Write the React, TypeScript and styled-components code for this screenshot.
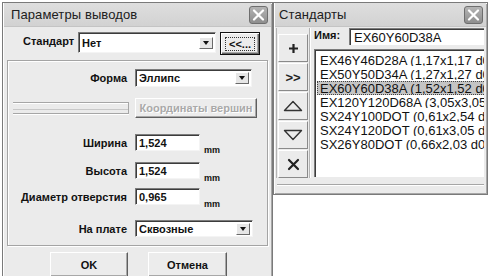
import React from 'react';
import styled, { createGlobalStyle } from 'styled-components';

const Global = createGlobalStyle`
  html, body { margin: 0; padding: 0; background: #ffffff; }
  body { font-family: "Liberation Sans", Arial, sans-serif; overflow: hidden; color: #111; }
  * { box-sizing: border-box; }
`;

const Page = styled.div`
  width: 490px;
  height: 276px;
  overflow: hidden;
  display: flex;
  align-items: flex-start;
  padding: 2px 0 0 2px;
`;

const Window = styled.div<{ $w: number; $h: number }>`
  width: ${p => p.$w}px;
  height: ${p => p.$h}px;
  flex: none;
  border: 1px solid #7a7a7a;
  box-shadow: inset 1px 1px 0 #ffffff, inset -1px -1px 0 #a8a8a8;
  background: #ebebeb;
  display: flex;
  flex-direction: column;
  padding: 0 1px;
`;

const TitleBar = styled.div<{ $pl: number }>`
  height: 24px;
  flex: none;
  display: flex;
  align-items: center;
  justify-content: space-between;
  padding: 0 3px 0 ${p => p.$pl}px;
  background: linear-gradient(#dedede, #d2d2d2);
  border-bottom: 1px solid #c4c4c4;
  font-size: 13px;
  color: #202020;
  letter-spacing: 0.1px;
`;

const CloseBtn = styled.div`
  width: 19px;
  height: 18px;
  border: 1px solid #6e6e6e;
  border-radius: 3px;
  background: linear-gradient(#b4b4b4, #8e8e8e);
  display: flex;
  align-items: center;
  justify-content: center;
`;

const Close = () => (
  <CloseBtn>
    <svg width="13" height="12" viewBox="0 0 13 12">
      <path d="M2 1.5 L11 10.5 M11 1.5 L2 10.5" stroke="#ffffff" strokeWidth="2.2" strokeLinecap="round" />
    </svg>
  </CloseBtn>
);

/* ---------- left dialog ---------- */

const StdRow = styled.div`
  display: flex;
  align-items: flex-start;
  height: 23px;
  margin-top: 5px;
  padding-left: 19px;
`;

const StdLabel = styled.div`
  width: 55px;
  padding-top: 3px;
  font-size: 11px;
  font-weight: bold;
`;

const Combo = styled.div<{ $w: number; $h: number }>`
  width: ${p => p.$w}px;
  height: ${p => p.$h}px;
  background: #fff;
  border-top: 1px solid #7c7c7c;
  border-left: 1px solid #7c7c7c;
  border-right: 1px solid #f4f4f4;
  border-bottom: 1px solid #f4f4f4;
  box-shadow: inset 1px 1px 0 #3c3c3c;
  display: flex;
  align-items: center;
  justify-content: space-between;
  padding: 0 2px 0 3px;
  font-size: 11px;
  font-weight: bold;
`;

const Drop = styled.div`
  width: 14px;
  height: 12px;
  background: #e6e6e6;
  border-top: 1px solid #fff;
  border-left: 1px solid #fff;
  border-right: 1px solid #6a6a6a;
  border-bottom: 1px solid #6a6a6a;
  display: flex;
  align-items: center;
  justify-content: center;
`;

const DropArrow = () => (
  <Drop>
    <svg width="6" height="4" viewBox="0 0 6 4">
      <path d="M0 0 H6 L3 4 Z" fill="#111" />
    </svg>
  </Drop>
);

const DefaultBtn = styled.div`
  width: 40px;
  height: 23px;
  margin-left: 4px;
  border: 1px solid #111;
  box-shadow: inset 1px 1px 0 #fff, inset -1px -1px 0 #666, inset -2px -2px 0 #a8a8a8;
  background: #ececec;
  display: flex;
  align-items: center;
  justify-content: center;
  font-size: 11px;
  font-weight: bold;
  &::after {
    content: '';
  }
`;

const FocusBox = styled.span`
  border: 1px dotted #333;
  padding: 0 3px;
  line-height: 12px;
`;

const GroupBox = styled.div`
  margin: 5px 3px 0 3px;
  height: 186px;
  border: 1px solid #a4a4a4;
  box-shadow: inset 1px 1px 0 #ffffff, 1px 1px 0 #ffffff;
  display: flex;
  flex-direction: column;
`;

const FieldRow = styled.div<{ $mt: number; $h: number }>`
  display: flex;
  align-items: center;
  margin-top: ${p => p.$mt}px;
  height: ${p => p.$h}px;
`;

const FieldLabel = styled.div`
  width: 119px;
  margin-right: 8px;
  text-align: right;
  font-size: 11px;
  font-weight: bold;
  white-space: nowrap;
`;

const Splitter = styled.div`
  width: 116px;
  height: 12px;
  margin: 0 6px 0 5px;
  border-top: 1px solid #a6a6a6;
  border-bottom: 1px solid #a6a6a6;
  border-right: 1px solid #a6a6a6;
  box-shadow: inset 0 1px 0 #fff, 0 1px 0 #fff, inset 0 -3px 0 #ebebeb, inset 0 -4px 0 #c8c8c8;
`;

const FlatBtn = styled.div<{ $w: number; $h: number; $disabled?: boolean }>`
  width: ${p => p.$w}px;
  height: ${p => p.$h}px;
  background: #ececec;
  border-top: 1px solid #ffffff;
  border-left: 1px solid #ffffff;
  border-right: 1px solid #5e5e5e;
  border-bottom: 1px solid #5e5e5e;
  box-shadow: inset -1px -1px 0 #a8a8a8;
  display: flex;
  align-items: center;
  justify-content: center;
  font-size: 11px;
  font-weight: bold;
  color: ${p => (p.$disabled ? '#a9a9a9' : '#111')};
  text-shadow: ${p => (p.$disabled ? '1px 1px 0 #ffffff' : 'none')};
`;

const TextBox = styled.div`
  width: 65px;
  height: 17px;
  background: #fff;
  border-top: 1px solid #7c7c7c;
  border-left: 1px solid #7c7c7c;
  border-right: 1px solid #f4f4f4;
  border-bottom: 1px solid #f4f4f4;
  box-shadow: inset 1px 1px 0 #3c3c3c;
  padding: 1px 0 0 3px;
  font-size: 11px;
  font-weight: bold;
  line-height: 14px;
`;

const Unit = styled.div`
  align-self: flex-end;
  margin: 0 0 -4px 4px;
  font-size: 9px;
  font-weight: bold;
`;

const ButtonRow = styled.div`
  display: flex;
  gap: 20px;
  margin-top: 6px;
  padding-left: 46px;
`;

/* ---------- right dialog ---------- */

const RightBody = styled.div`
  display: flex;
  margin-top: 1px;
`;

const ToolColumn = styled.div`
  width: 34px;
  margin-left: 1px;
  padding: 6px 0 0 1px;
  border-left: 1px solid #b4b4b4;
  border-right: 1px solid #b4b4b4;
  box-shadow: 1px 0 0 #ffffff;
  display: flex;
  flex-direction: column;
  gap: 1px;
`;

const ToolBtn = styled.div`
  width: 30px;
  height: 28px;
  background: #ebebeb;
  border-top: 1px solid #ffffff;
  border-left: 1px solid #ffffff;
  border-right: 1px solid #8a8a8a;
  border-bottom: 1px solid #8a8a8a;
  display: flex;
  align-items: center;
  justify-content: center;
  font-size: 13px;
  font-weight: bold;
  color: #222;
`;

const RightCol = styled.div`
  width: 170px;
  margin-left: 4px;
  display: flex;
  flex-direction: column;
`;

const NameRow = styled.div`
  display: flex;
  align-items: flex-start;
  height: 17px;
`;

const NameLabel = styled.div`
  width: 35px;
  padding-top: 1px;
  font-size: 11px;
  font-weight: bold;
`;

const NameInput = styled.div`
  flex: 1;
  height: 17px;
  background: #fff;
  border-top: 1px solid #7c7c7c;
  border-left: 1px solid #7c7c7c;
  box-shadow: inset 1px 1px 0 #3c3c3c;
  padding: 1px 0 0 4px;
  font-size: 13px;
  line-height: 15px;
  white-space: nowrap;
  overflow: hidden;
`;

const ListBox = styled.div`
  margin-top: 4px;
  height: 128px;
  background: #fff;
  border-top: 1px solid #7c7c7c;
  border-left: 1px solid #7c7c7c;
  box-shadow: inset 1px 1px 0 #3c3c3c;
  padding: 3px 0 0 2px;
  overflow: hidden;
`;

const ListItem = styled.div<{ $sel?: boolean }>`
  height: 14px;
  line-height: 13px;
  font-size: 13px;
  padding-left: 2px;
  white-space: nowrap;
  overflow: hidden;
  color: #111;
  background: ${p => (p.$sel ? '#c4c4c4' : 'transparent')};
  border: 1px dotted ${p => (p.$sel ? '#444' : 'transparent')};
  border-right: none;
  margin: ${p => (p.$sel ? '0' : '0')};
`;

const Separator = styled.div`
  margin: 6px 2px 0 2px;
  height: 2px;
  border-top: 1px solid #a6a6a6;
  border-bottom: 1px solid #ffffff;
`;

const items = [
  'EX46Y46D28A (1,17x1,17 d0,71)',
  'EX50Y50D34A (1,27x1,27 d0,86)',
  'EX60Y60D38A (1,52x1,52 d0,97)',
  'EX120Y120D68A (3,05x3,05 d1,73)',
  'SX24Y100DOT (0,61x2,54 d0)',
  'SX24Y120DOT (0,61x3,05 d0)',
  'SX26Y80DOT (0,66x2,03 d0)',
];

const TriUp = () => (
  <svg width="20" height="12" viewBox="0 0 20 12">
    <path d="M1.5 10.5 L10 1.5 L18.5 10.5 Z" fill="none" stroke="#333" strokeWidth="1.4" strokeLinejoin="round" />
  </svg>
);

const TriDown = () => (
  <svg width="20" height="12" viewBox="0 0 20 12">
    <path d="M1.5 1.5 L10 10.5 L18.5 1.5 Z" fill="none" stroke="#333" strokeWidth="1.4" strokeLinejoin="round" />
  </svg>
);

const Cross = () => (
  <svg width="13" height="13" viewBox="0 0 13 13">
    <path d="M2 2 L11 11 M11 2 L2 11" stroke="#222" strokeWidth="2.2" strokeLinecap="round" />
  </svg>
);

const Plus = () => (
  <svg width="11" height="11" viewBox="0 0 11 11">
    <path d="M5.5 1 V10 M1 5.5 H10" stroke="#222" strokeWidth="2.2" />
  </svg>
);

export default function App() {
  return (
    <>
      <Global />
      <Page>
        <Window $w={271} $h={282}>
          <TitleBar $pl={7}>
            <span>Параметры выводов</span>
            <Close />
          </TitleBar>
          <StdRow>
            <StdLabel>Стандарт</StdLabel>
            <Combo $w={138} $h={21}>
              <span>Нет</span>
              <DropArrow />
            </Combo>
            <DefaultBtn>
              <FocusBox>&lt;&lt;...</FocusBox>
            </DefaultBtn>
          </StdRow>
          <GroupBox>
            <FieldRow $mt={8} $h={18}>
              <FieldLabel>Форма</FieldLabel>
              <Combo $w={117} $h={18}>
                <span>Эллипс</span>
                <DropArrow />
              </Combo>
            </FieldRow>
            <FieldRow $mt={11} $h={20}>
              <Splitter />
              <FlatBtn $w={122} $h={20} $disabled>Координаты вершин</FlatBtn>
            </FieldRow>
            <FieldRow $mt={16} $h={17}>
              <FieldLabel>Ширина</FieldLabel>
              <TextBox>1,524</TextBox>
              <Unit>mm</Unit>
            </FieldRow>
            <FieldRow $mt={11} $h={17}>
              <FieldLabel>Высота</FieldLabel>
              <TextBox>1,524</TextBox>
              <Unit>mm</Unit>
            </FieldRow>
            <FieldRow $mt={9} $h={17}>
              <FieldLabel>Диаметр отверстия</FieldLabel>
              <TextBox>0,965</TextBox>
              <Unit>mm</Unit>
            </FieldRow>
            <FieldRow $mt={15} $h={17}>
              <FieldLabel>На плате</FieldLabel>
              <Combo $w={118} $h={17}>
                <span>Сквозные</span>
                <DropArrow />
              </Combo>
            </FieldRow>
          </GroupBox>
          <ButtonRow>
            <FlatBtn $w={78} $h={25}>OK</FlatBtn>
            <FlatBtn $w={79} $h={25}>Отмена</FlatBtn>
          </ButtonRow>
        </Window>
        <Window $w={215} $h={193}>
          <TitleBar $pl={4}>
            <span>Стандарты</span>
            <Close />
          </TitleBar>
          <RightBody>
            <ToolColumn>
              <ToolBtn><Plus /></ToolBtn>
              <ToolBtn>&gt;&gt;</ToolBtn>
              <ToolBtn><TriUp /></ToolBtn>
              <ToolBtn><TriDown /></ToolBtn>
              <ToolBtn><Cross /></ToolBtn>
            </ToolColumn>
            <RightCol>
              <NameRow>
                <NameLabel>Имя:</NameLabel>
                <NameInput>EX60Y60D38A</NameInput>
              </NameRow>
              <ListBox>
                {items.map((t, i) => (
                  <ListItem key={t} $sel={i === 2}>{t}</ListItem>
                ))}
              </ListBox>
            </RightCol>
          </RightBody>
          <Separator />
        </Window>
      </Page>
    </>
  );
}
